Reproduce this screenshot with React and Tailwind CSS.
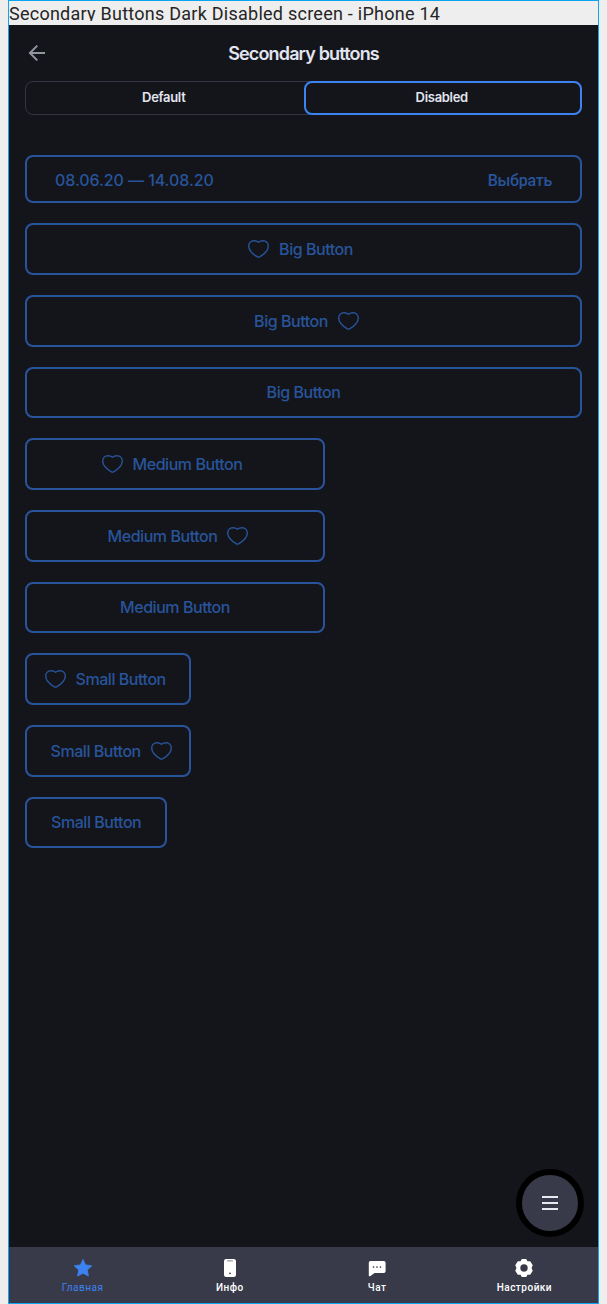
import React from 'react';

function Heart() {
  return (
    <svg className="h-[18px] w-[21px] shrink-0" viewBox="0 0 21 18" fill="none" stroke="currentColor" strokeWidth="1.4" strokeLinejoin="round">
      <path d="M10.5 2.3C9.2 1.1 7.7.7 6 .7C2.9.7.7 2.9.7 6C.7 10.3 5.2 14.3 9.1 16.7Q10.5 17.5 11.9 16.7C15.8 14.3 20.3 10.3 20.3 6C20.3 2.9 18.1.7 15 .7C13.3.7 11.8 1.1 10.5 2.3Z" />
    </svg>
  );
}

function SecondaryButton({ label, icon, size }) {
  const width = { big: 'w-full', medium: 'w-[300px]', small: icon ? 'w-[166.4px]' : 'w-[142.4px]' }[size];
  return (
    <button
      disabled
      className={`flex shrink-0 items-center justify-center gap-1 rounded-lg border-2 border-[#28549b] text-[#28549b] ${width} ${icon ? 'h-[52px]' : 'h-[51px] pb-[2px]'}`}
    >
      {icon === 'left' && <Heart />}
      <span className="px-1.5 text-base leading-6 font-medium tracking-[-0.46px] whitespace-nowrap">{label}</span>
      {icon === 'right' && <Heart />}
    </button>
  );
}

const buttons = [
  { size: 'big', label: 'Big Button' },
  { size: 'medium', label: 'Medium Button' },
  { size: 'small', label: 'Small Button' },
].flatMap((b) => ['left', 'right', null].map((icon) => ({ ...b, icon })));

function StarIcon() {
  return (
    <svg className="size-5" viewBox="0 0 20 20" fill="currentColor" stroke="currentColor" strokeWidth="0.8" strokeLinejoin="round">
      <path d="M10 1.4L12.6 6.9L18.8 7.7L14.3 12L15.4 18.1L10 15.2L4.6 18.1L5.7 12L1.2 7.7L7.4 6.9Z" />
    </svg>
  );
}

function PhoneIcon() {
  return (
    <svg className="size-5" viewBox="0 0 20 20">
      <rect x="4" y="1" width="12" height="18" rx="2.2" fill="#fff" />
      <path d="M7.5 2.8h5" stroke="#9a9ba4" strokeWidth="1.2" strokeLinecap="round" />
      <circle cx="10" cy="15.3" r=".9" fill="#383a49" />
    </svg>
  );
}

function ChatIcon() {
  return (
    <svg className="size-5" viewBox="0 0 20 20">
      <path d="M3.5 3H16.8Q18.6 3 18.6 4.8V13.2Q18.6 15 16.8 15H7.6L3.4 18.1Q1.8 18.8 1.8 17.4V4.8Q1.8 3 3.5 3Z" fill="#fff" />
      <g fill="#383a49">
        <circle cx="6.5" cy="9" r=".85" />
        <circle cx="10" cy="9" r=".85" />
        <circle cx="13.5" cy="9" r=".85" />
      </g>
    </svg>
  );
}

function GearIcon() {
  return (
    <svg className="size-5" viewBox="0 0 20 20">
      <path
        d="M8.2 1.6H11.8L13 4L15.8 3.9L18 7.3L16.8 10L18 12.7L15.8 16.1L13 16L11.8 18.4H8.2L7 16L4.2 16.1L2 12.7L3.2 10L2 7.3L4.2 3.9L7 4Z"
        fill="#fff"
        stroke="#fff"
        strokeWidth="1.4"
        strokeLinejoin="round"
      />
      <circle cx="10" cy="10" r="3.7" fill="#383a49" />
    </svg>
  );
}

const tabs = [
  { label: 'Главная', Icon: StarIcon, active: true },
  { label: 'Инфо', Icon: PhoneIcon },
  { label: 'Чат', Icon: ChatIcon },
  { label: 'Настройки', Icon: GearIcon },
];

export default function App() {
  return (
    <div className="h-[1304px] w-[607px] bg-[#eeeeee] pl-2 font-['Inter',sans-serif]">
      <div className="relative flex h-full w-[591px] flex-col border border-[#0da5f2]">
        <div className="h-6 shrink-0">
          <div className="h-5 overflow-hidden font-['Roboto',sans-serif] text-[18px] leading-[25px] tracking-[0.25px] whitespace-nowrap text-[#252525]">
            Secondary Buttons Dark Disabled screen - iPhone 14
          </div>
        </div>
        <main className="flex flex-1 flex-col bg-[#14151a] px-4">
          <header className="grid h-14 shrink-0 grid-cols-[24px_1fr_24px] items-center">
            <svg className="size-6 text-[#9294a0]" viewBox="0 0 24 24" fill="none" stroke="currentColor" strokeWidth="2">
              <path d="M20 12H5M12.3 4.6L4.9 12L12.3 19.4" />
            </svg>
            <h1 className="pt-0.5 text-center text-[18px] leading-6 font-semibold tracking-[-0.84px] text-[#e2e5f0]">Secondary buttons</h1>
          </header>
          <div className="grid h-[34px] shrink-0 grid-cols-2 rounded-lg border border-[#343544] text-[13px] font-semibold tracking-[-0.3px] text-[#e2e5f0]">
            <button className="pr-0.5">Default</button>
            <button className="-my-px -mr-px rounded-lg border-2 border-[#3c82f0] pr-0.5">Disabled</button>
          </div>
          <div className="mt-10 flex flex-col items-start gap-5">
            <div className="flex h-12 w-full items-center justify-between rounded-lg border-2 border-[#28549b] px-7 pt-0.5 text-base font-medium text-[#28549b]">
              <span className="tracking-[-0.07px]">08.06.20 — 14.08.20</span>
              <span className="pt-0.5 font-['Roboto',sans-serif] tracking-[-0.25px]">Выбрать</span>
            </div>
            {buttons.map((b) => (
              <SecondaryButton key={`${b.size}-${b.icon}`} {...b} />
            ))}
          </div>
        </main>
        <button aria-label="Menu" className="absolute right-[14px] bottom-[66px] flex size-[68px] items-center justify-center rounded-full border-[6px] border-black bg-[#383a49]">
          <svg className="h-4 w-4" viewBox="0 0 16 16" stroke="#e8eaf2" strokeWidth="2">
            <path d="M0 2H16M0 8H16M0 14H16" />
          </svg>
        </button>
        <nav className="grid h-14 shrink-0 grid-cols-4 bg-[#383a49]">
          {tabs.map(({ label, Icon, active }) => (
            <div key={label} className={`flex flex-col items-center pt-[11px] ${active ? 'text-[#3c82f0]' : 'text-white'}`}>
              <Icon />
              <span className={`mt-1 font-['Roboto',sans-serif] text-[10px] leading-3 tracking-[0.5px] ${active ? 'font-normal' : 'font-medium'}`}>{label}</span>
            </div>
          ))}
        </nav>
      </div>
    </div>
  );
}
